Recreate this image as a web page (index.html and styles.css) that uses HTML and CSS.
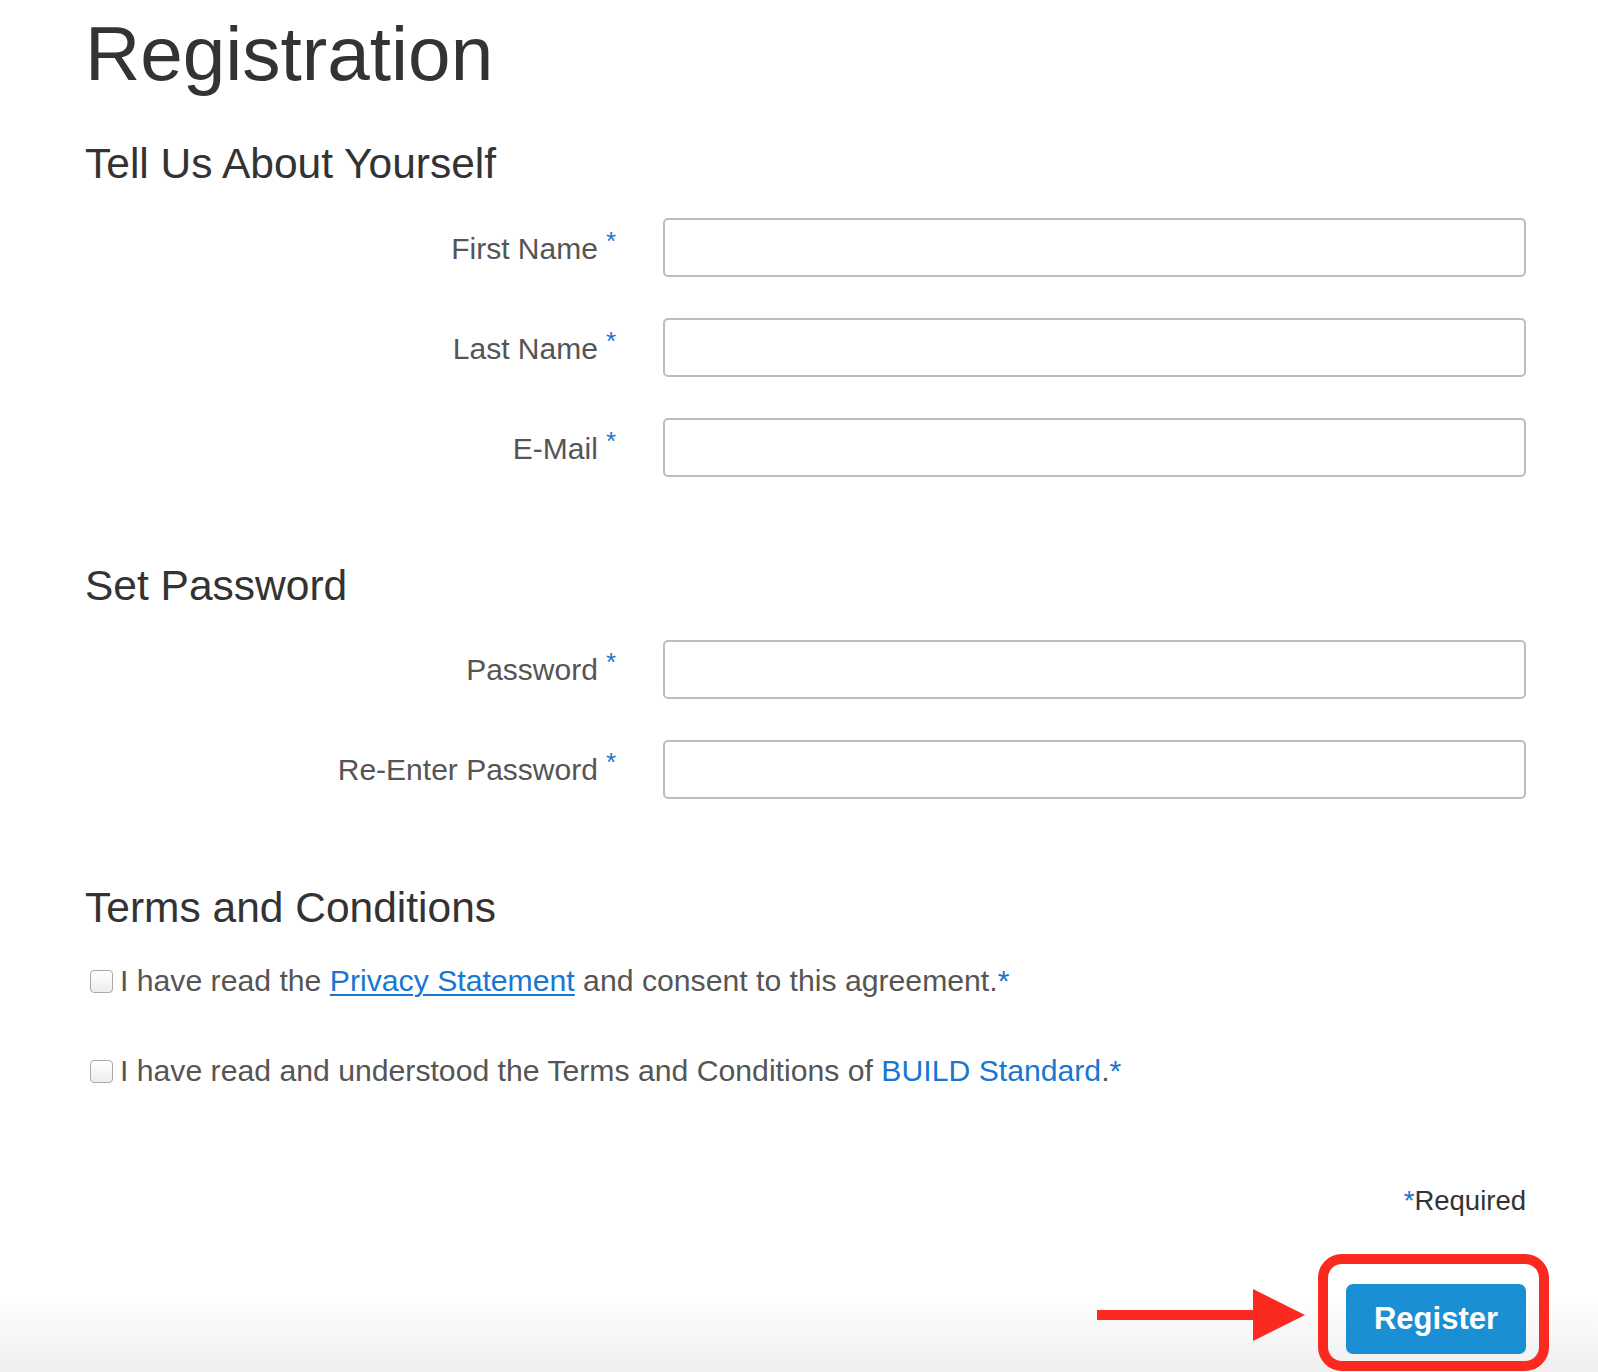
FILE: index.html
```html
<!DOCTYPE html>
<html lang="en">
<head>
<meta charset="utf-8">
<title>Registration</title>
<link rel="stylesheet" href="styles.css">
</head>
<body>
<main class="page">
  <h1 class="title">Registration</h1>

  <h2 class="section-title first">Tell Us About Yourself</h2>
  <div class="fields">
    <div class="row">
      <label class="label" for="fn">First Name<span class="req">*</span></label>
      <input class="input" id="fn" type="text">
    </div>
    <div class="row">
      <label class="label" for="ln">Last Name<span class="req">*</span></label>
      <input class="input" id="ln" type="text">
    </div>
    <div class="row">
      <label class="label" for="em">E-Mail<span class="req">*</span></label>
      <input class="input" id="em" type="text">
    </div>
  </div>

  <h2 class="section-title">Set Password</h2>
  <div class="fields">
    <div class="row">
      <label class="label" for="pw">Password<span class="req">*</span></label>
      <input class="input" id="pw" type="password">
    </div>
    <div class="row">
      <label class="label" for="pw2">Re-Enter Password<span class="req">*</span></label>
      <input class="input" id="pw2" type="password">
    </div>
  </div>

  <h2 class="section-title">Terms and Conditions</h2>
  <div class="checks">
    <label class="check"><input type="checkbox" class="box"><span>I have read the <a href="#" class="link underline">Privacy Statement</a> and consent to this agreement.<span class="blue">*</span></span></label>
    <label class="check"><input type="checkbox" class="box"><span>I have read and understood the Terms and Conditions of <a href="#" class="link">BUILD Standard</a>.<span class="blue">*</span></span></label>
  </div>

  <p class="required"><span class="blue">*</span>Required</p>

  <div class="submit-row">
    <div class="submit-wrap">
      <button class="btn" type="button">Register</button>
      <span class="highlight"></span>
      <svg class="arrow" width="208" height="54" viewBox="0 0 208 54">
        <rect x="0" y="21" width="160" height="10" fill="#fb2a20"/>
        <polygon points="156,0 208,26 156,52" fill="#fb2a20"/>
      </svg>
    </div>
  </div>
</main>
</body>
</html>
```

FILE: styles.css
```css
html, body {
  margin: 0;
  padding: 0;
}

body {
  min-height: 1372px;
  font-family: "Liberation Sans", Arial, Helvetica, sans-serif;
  background: linear-gradient(to bottom, #ffffff 0, #ffffff 1295px, #efefef 1372px);
  color: #333;
}

.page {
  padding: 16px 72px 0 85px;
}

.title {
  margin: 0;
  font-size: 76.5px;
  line-height: 1;
  font-weight: normal;
  color: #333;
}

.section-title {
  margin: 88px 0 32px;
  font-size: 42.5px;
  line-height: 1;
  font-weight: normal;
  color: #333;
}

.section-title.first {
  margin-top: 50px;
  margin-bottom: 33px;
}

.fields {
  display: flex;
  flex-direction: column;
  gap: 41px;
}

.row {
  display: grid;
  grid-template-columns: 535px 863px;
  column-gap: 43px;
  align-items: center;
}

.label {
  text-align: right;
  font-size: 30px;
  line-height: 1;
  color: #555;
  padding-right: 4px;
  padding-bottom: 4px;
}

.req {
  display: inline-block;
  margin-left: 8px;
  font-size: 26px;
  color: #1976d2;
  vertical-align: 9px;
}

.input {
  box-sizing: border-box;
  height: 59px;
  width: 863px;
  margin: 0;
  border: 2px solid #bdbdbd;
  border-radius: 5px;
  background: #fff;
}

.checks {
  display: flex;
  flex-direction: column;
  gap: 50px;
  margin-top: 30px;
}

.check {
  display: flex;
  align-items: center;
  font-size: 30.2px;
  line-height: 40px;
  color: #555;
}

.box {
  appearance: none;
  -webkit-appearance: none;
  box-sizing: border-box;
  width: 23px;
  height: 23px;
  margin: 0 7px 0 5px;
  border: 1px solid #a9a9a9;
  border-radius: 4px;
  background: linear-gradient(to bottom, #ffffff, #ededed);
  flex: none;
}

.link {
  color: #1976d2;
  text-decoration: none;
}

.link.underline {
  text-decoration: underline;
  text-underline-offset: 3px;
  text-decoration-thickness: 2px;
}

.blue {
  color: #1976d2;
}

.required {
  margin: 96px 0 0;
  text-align: right;
  font-size: 27.5px;
  line-height: 1;
  color: #333;
}

.submit-row {
  display: flex;
  justify-content: flex-end;
  margin-top: 69px;
}

.submit-wrap {
  position: relative;
}

.btn {
  display: block;
  width: 180px;
  height: 70px;
  border: none;
  border-radius: 7px;
  background: #1b8fd3;
  color: #fff;
  font-family: "Liberation Sans", Arial, Helvetica, sans-serif;
  font-size: 31px;
  font-weight: bold;
  cursor: pointer;
}

.highlight {
  position: absolute;
  left: -28px;
  right: -23px;
  top: -30px;
  bottom: -17px;
  border: 10px solid #fb2a20;
  border-radius: 24px;
  pointer-events: none;
}

.arrow {
  position: absolute;
  left: -249px;
  top: 5px;
}
```
